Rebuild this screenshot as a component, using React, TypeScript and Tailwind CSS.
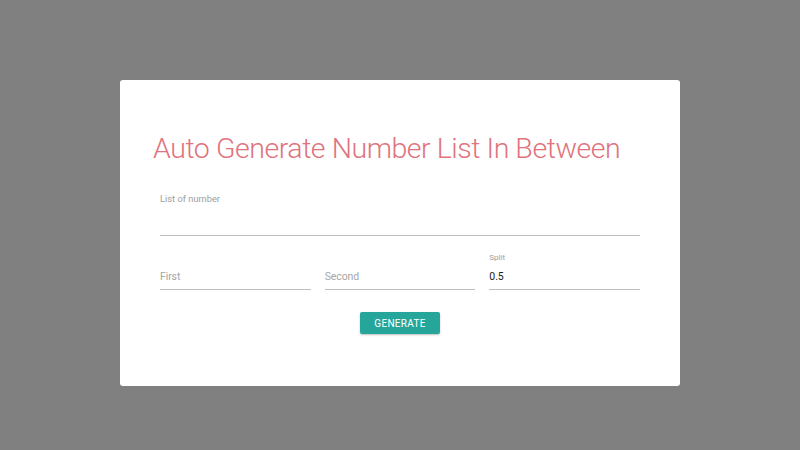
import { useState } from "react";

function Field({
  label,
  placeholder,
  value,
  onChange,
  labelClass,
  inputClass,
}: {
  label?: string;
  placeholder?: string;
  value: string;
  onChange: (v: string) => void;
  labelClass: string;
  inputClass: string;
}) {
  return (
    <div className="flex flex-1 flex-col">
      <label className={labelClass}>{label}</label>
      <input
        value={value}
        placeholder={placeholder}
        onChange={(e) => onChange(e.target.value)}
        className={`w-full border-b border-[#bdbdbd] bg-transparent px-0 text-[10.5px] tracking-[-0.1px] text-[#222] placeholder:text-[#a6a6a6] focus:outline-none ${inputClass}`}
      />
    </div>
  );
}

export default function App() {
  const [list, setList] = useState("");
  const [first, setFirst] = useState("");
  const [second, setSecond] = useState("");
  const [split, setSplit] = useState("0.5");

  return (
    <div
      className="h-[450px] w-[800px] overflow-hidden bg-[#808080] pt-[80px]"
      style={{ fontFamily: "Roboto, 'Liberation Sans', sans-serif" }}
    >
      <div className="mx-auto h-[306px] w-[560px] rounded-[3px] bg-white pt-[51px]">
        {/* Title */}
        <h1 className="pl-[33px] text-[28.5px] font-light leading-[36px] tracking-[-0.45px] text-[#e0737d]">
          Auto Generate Number List In Between
        </h1>

        <div className="px-[40px]">
          {/* List of number */}
          <div className="mt-[25px]">
            <Field
              label="List of number"
              value={list}
              onChange={setList}
              labelClass="block h-[12px] pt-[1px] text-[9.3px] leading-[12px] text-[#9e9e9e]"
              inputClass="h-[32px]"
            />
          </div>

          {/* First / Second / Split */}
          <div className="mt-[17px] flex gap-[14px]">
            <Field
              placeholder="First"
              value={first}
              onChange={setFirst}
              labelClass="block h-[10px]"
              inputClass="h-[27px] pt-[1px]"
            />
            <Field
              placeholder="Second"
              value={second}
              onChange={setSecond}
              labelClass="block h-[10px]"
              inputClass="h-[27px] pt-[1px]"
            />
            <Field
              label="Split"
              value={split}
              onChange={setSplit}
              labelClass="block h-[10px] text-[8px] leading-[10px] text-[#9e9e9e]"
              inputClass="h-[27px] pt-[1px]"
            />
          </div>

          {/* Generate */}
          <div className="mt-[22px] flex justify-center">
            <button
              type="button"
              className="h-[22px] w-[80px] rounded-[2px] bg-[#26a69a] text-[10px] uppercase tracking-[0.3px] text-white shadow-[0_1px_2px_rgba(0,0,0,0.25)]"
            >
              Generate
            </button>
          </div>
        </div>
      </div>
    </div>
  );
}
